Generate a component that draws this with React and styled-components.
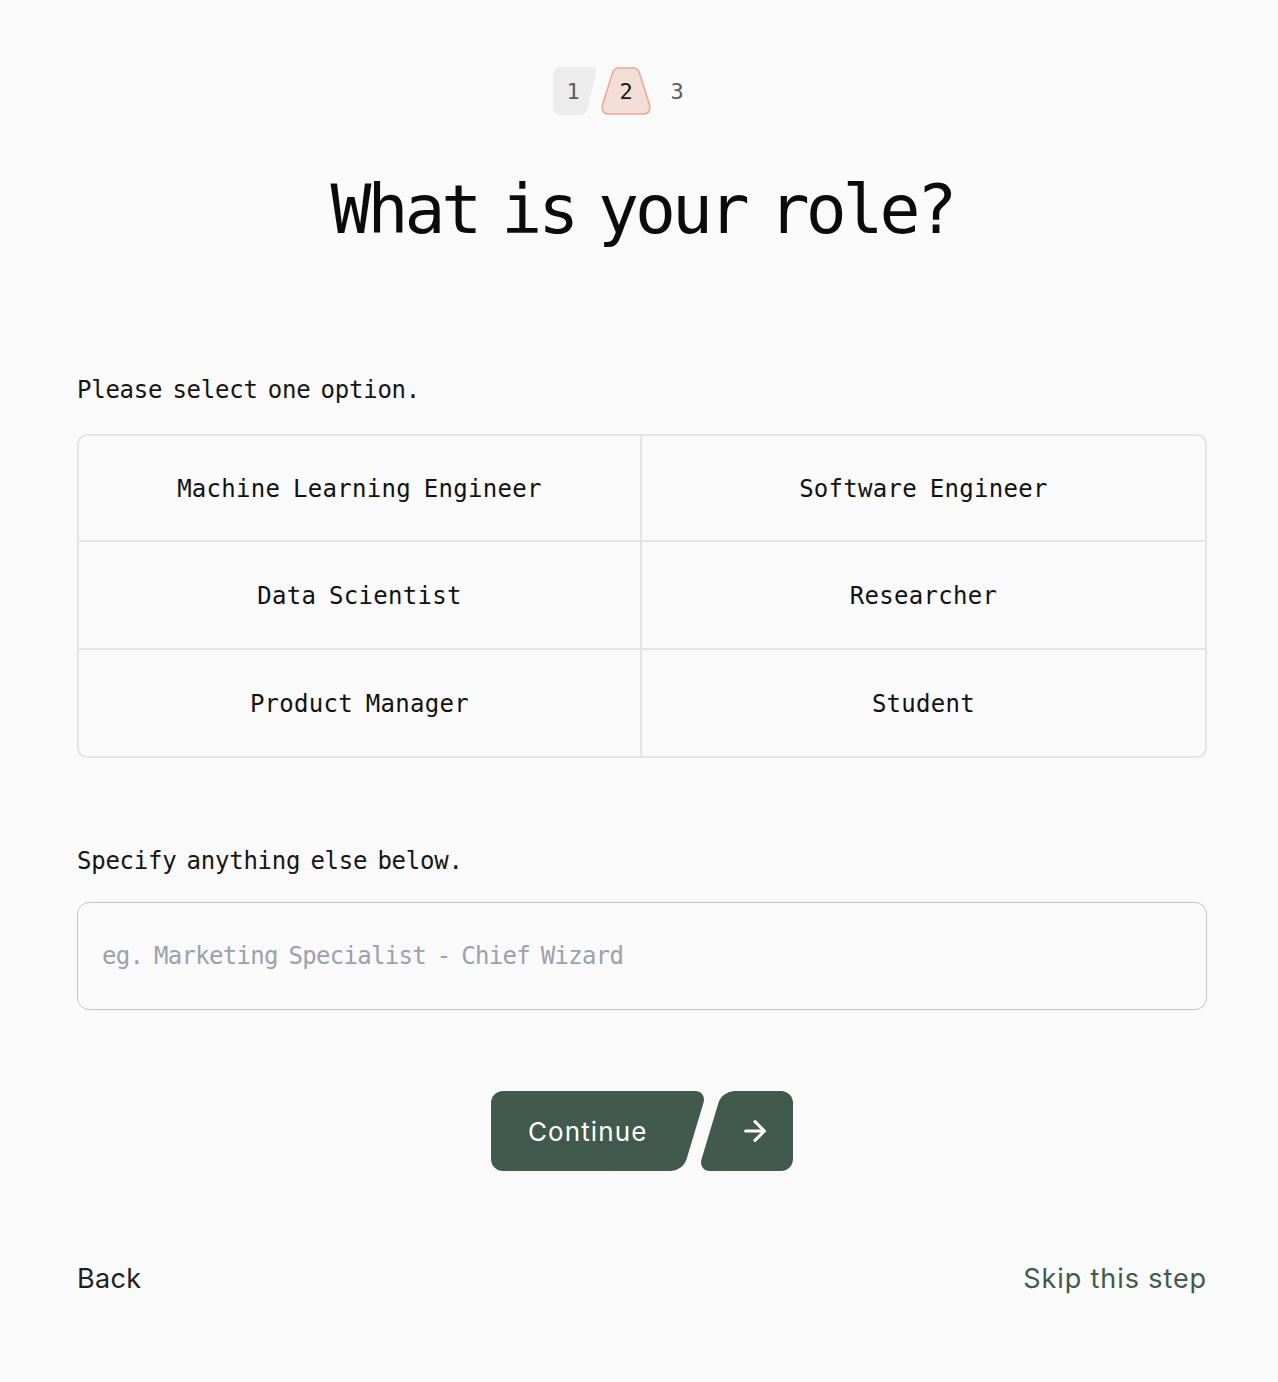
import styled, { createGlobalStyle } from "styled-components";
import { ArrowRight } from "lucide-react";

const roles = [
  "Machine Learning Engineer",
  "Software Engineer",
  "Data Scientist",
  "Researcher",
  "Product Manager",
  "Student",
];

const GREEN = "#42594d";

export default function App() {
  return (
    <>
      <GlobalStyle />
      <Page>
        <Steps>
          <Step>
            <StepShape viewBox="0 0 44 48" width="44" height="48">
              <path
                d="M8 0 H38 Q45 0 43 6 L34 43 Q33 48 28 48 H8 Q0 48 0 40 V8 Q0 0 8 0 Z"
                fill="#ececec"
              />
            </StepShape>
            <StepNumber>1</StepNumber>
          </Step>
          <Step>
            <StepShape viewBox="0 0 50 48" width="50" height="48">
              <path
                d="M18 1 H32 Q37 1 38.5 6 L48.5 38 Q50 47 42 47 H8 Q0 47 1.5 38 L11.5 6 Q13 1 18 1 Z"
                fill="#f3ded7"
                stroke="#eea993"
                strokeWidth="1.6"
              />
            </StepShape>
            <StepNumber $active>2</StepNumber>
          </Step>
          <Step>
            <StepNumber>3</StepNumber>
          </Step>
        </Steps>

        <Title>What is your role?</Title>

        <Label>Please select one option.</Label>
        <RoleGrid>
          {roles.map((role) => (
            <RoleCell key={role}>{role}</RoleCell>
          ))}
        </RoleGrid>

        <Label $space={87}>Specify anything else below.</Label>
        <TextInput placeholder="eg. Marketing Specialist - Chief Wizard" />

        <Actions>
          <ContinueButton>
            <span>Continue</span>
          </ContinueButton>
          <ArrowButton>
            <ArrowRight size={32} strokeWidth={2.3} color="#fff" />
          </ArrowButton>
        </Actions>

        <Footer>
          <BackLink>Back</BackLink>
          <SkipLink>Skip this step</SkipLink>
        </Footer>
      </Page>
    </>
  );
}

const GlobalStyle = createGlobalStyle`
  body {
    margin: 0;
    background: #fafafa;
    font-family: "DejaVu Sans Mono", monospace;
    color: #111;
  }
`;

const Page = styled.div`
  display: flex;
  flex-direction: column;
  padding: 67px 71px 0 77px;
  min-height: 1382px;
  box-sizing: border-box;
`;

const Steps = styled.div`
  display: flex;
  justify-content: center;
  align-items: center;
  gap: 4px;
  height: 48px;
  margin-left: -32px;
`;

const Step = styled.div`
  position: relative;
  display: flex;
  align-items: center;
  justify-content: center;
  min-width: 44px;
  height: 48px;
  &:nth-child(2) {
    min-width: 50px;
  }
  &:nth-child(3) {
    min-width: 40px;
    margin-left: 4px;
  }
`;

const StepShape = styled.svg`
  position: absolute;
  left: 0;
  top: 0;
`;

const StepNumber = styled.span`
  position: relative;
  font-size: 22px;
  color: ${(p) => (p.$active ? "#1a1a1a" : "#5c5c5c")};
  margin-right: ${(p) => (p.$active ? "0" : "4px")};
`;

const Title = styled.h1`
  margin: 55px 0 0;
  text-align: center;
  font-size: 68px;
  line-height: 80px;
  font-weight: 400;
  letter-spacing: -4px;
  word-spacing: -14px;
  color: #0b0b0b;
`;

const Label = styled.p`
  margin: ${(p) => p.$space || 124}px 0 0;
  font-size: 24px;
  line-height: 32px;
  letter-spacing: -0.25px;
  word-spacing: -4px;
  color: #151515;
`;

const RoleGrid = styled.div`
  display: grid;
  grid-template-columns: 1fr 1fr;
  grid-template-rows: 106px 108px 106px;
  margin-top: 28px;
  border: 2px solid #e4e4e4;
  border-radius: 10px;
  overflow: hidden;
`;

const RoleCell = styled.div`
  display: flex;
  align-items: center;
  justify-content: center;
  box-sizing: border-box;
  padding-top: 2px;
  font-size: 24px;
  letter-spacing: 0.3px;
  word-spacing: -2px;
  color: #111;
  border-bottom: 2px solid #e4e4e4;
  &:nth-child(odd) {
    border-right: 2px solid #e4e4e4;
  }
  &:nth-last-child(-n + 2) {
    border-bottom: none;
  }
`;

const TextInput = styled.input`
  margin-top: 25px;
  height: 108px;
  box-sizing: border-box;
  padding: 0 24px;
  border: 1.5px solid #c6c6c6;
  border-radius: 12px;
  background: #fafafa;
  font-family: "DejaVu Sans Mono", monospace;
  font-size: 24px;
  letter-spacing: -0.7px;
  word-spacing: -3px;
  outline: none;
  &::placeholder {
    color: #9ca1ab;
  }
`;

const Actions = styled.div`
  display: flex;
  justify-content: center;
  align-items: center;
  gap: 3px;
  margin-top: 81px;
`;

const ContinueButton = styled.div`
  position: relative;
  width: 216px;
  height: 80px;
  display: flex;
  align-items: center;
  padding-left: 37px;
  box-sizing: border-box;
  font-family: Inter, "Noto Sans", sans-serif;
  font-size: 26px;
  letter-spacing: 1.1px;
  color: #fff;

  &::before {
    content: "";
    position: absolute;
    top: 0;
    bottom: 0;
    left: 0;
    right: 50px;
    background: ${GREEN};
    border-radius: 12px 0 0 12px;
  }
  &::after {
    content: "";
    position: absolute;
    top: 0;
    bottom: 0;
    right: 12px;
    width: 80px;
    background: ${GREEN};
    border-radius: 12px;
    transform: skewX(-16.7deg);
  }
  span {
    position: relative;
    z-index: 1;
  }
`;

const ArrowButton = styled.div`
  position: relative;
  width: 83px;
  height: 80px;
  display: flex;
  align-items: center;
  justify-content: center;
  padding-left: 6px;
  box-sizing: border-box;

  &::before {
    content: "";
    position: absolute;
    top: 0;
    bottom: 0;
    left: 0;
    width: 60px;
    background: ${GREEN};
    border-radius: 12px;
    transform: skewX(-16.7deg);
  }
  &::after {
    content: "";
    position: absolute;
    top: 0;
    bottom: 0;
    left: 30px;
    right: 0;
    background: ${GREEN};
    border-radius: 0 12px 12px 0;
  }
  svg {
    position: relative;
    z-index: 1;
  }
`;

const Footer = styled.div`
  display: flex;
  justify-content: space-between;
  align-items: center;
  margin-top: 92px;
  font-family: Inter, "Noto Sans", sans-serif;
  font-size: 27px;
  line-height: 32px;
  letter-spacing: 0.9px;
`;

const BackLink = styled.span`
  color: #1f1f1f;
  letter-spacing: 0.3px;
`;

const SkipLink = styled.span`
  color: ${GREEN};
`;
